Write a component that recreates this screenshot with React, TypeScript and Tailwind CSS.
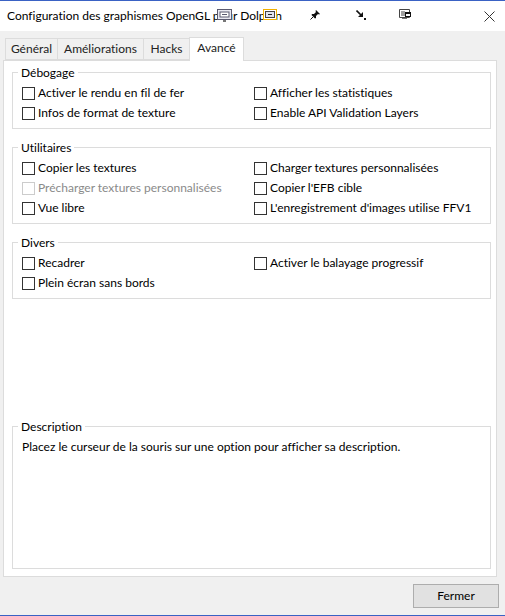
import React from "react";

const font = { fontFamily: '"Lato","Open Sans",sans-serif' };

function Check({ label, disabled }: { label: string; disabled?: boolean }) {
  return (
    <div className="flex items-center h-5">
      <span className={"w-[13px] h-[13px] border bg-white shrink-0 " + (disabled ? "border-[#cccccc]" : "border-[#333333]")} />
      <span className={"ml-[3px] whitespace-nowrap " + (disabled ? "text-[#8a8a8a]" : "text-black")}>{label}</span>
    </div>
  );
}

function Group({ title, rows, className }: { title: string; rows: [string | null, string | null, boolean?][]; className: string }) {
  return (
    <div className={"relative border border-[#dcdcdc] h-[57px] pl-[9px] pt-[10px] " + className}>
      <span className="absolute left-[5px] -top-[8px] bg-white px-[3px] leading-[16px] text-black">{title}</span>
      {rows.map((r, i) => (
        <div key={i} className="flex">
          <div className="w-[232px]">{r[0] && <Check label={r[0]} disabled={r[2]} />}</div>
          <div>{r[1] && <Check label={r[1]} />}</div>
        </div>
      ))}
    </div>
  );
}

function Tab({ label, active, w }: { label: string; active?: boolean; w: string }) {
  return (
    <div className={"flex items-center justify-center border border-[#dcdcdc] " + w + " " + (active ? "h-[24px] bg-white border-b-0 -mb-px pb-[3px] relative z-10" : "h-[22px] bg-[#f0f0f0] -mr-px")}>
      {label}
    </div>
  );
}

function Icons() {
  return (
    <>
      <svg className="absolute left-[217px] top-[8px]" width="15" height="14" viewBox="0 0 15 14">
        <rect x="0.5" y="0.5" width="14" height="10" fill="#e8e8f0" stroke="#5a5a70" />
        <rect x="3" y="3" width="9" height="5" fill="#fff" stroke="#5a5a70" />
        <rect x="5" y="5" width="5" height="1" fill="#5a5a70" />
        <rect x="6" y="11" width="3" height="2" fill="#777" />
      </svg>
      <svg className="absolute left-[263px] top-[8px]" width="14" height="11" viewBox="0 0 14 11">
        <rect x="0.5" y="0.5" width="13" height="10" fill="#fff" stroke="#f0b000" />
        <rect x="2.5" y="2.5" width="9" height="6" fill="#dfe3ee" stroke="#444" />
        <rect x="5" y="5" width="4" height="1" fill="#222" />
      </svg>
      <svg className="absolute left-[310px] top-[8px]" width="11" height="11" viewBox="0 0 11 11">
        <path d="M6 1l4 4-1 .5-1-.5-2 2v2L5 9.5 1.5 6 2 5h2l2-2-.5-1z" fill="#111" />
        <path d="M3 8L0.5 10.5" stroke="#111" />
      </svg>
      <svg className="absolute left-[356px] top-[9px]" width="10" height="10" viewBox="0 0 10 10">
        <path d="M0.5 0.5L6 6" stroke="#111" strokeWidth="1.6" />
        <path d="M7 2v5H2z" fill="#111" />
        <rect x="8" y="8" width="2" height="2" fill="#111" />
      </svg>
      <svg className="absolute left-[399px] top-[8px]" width="12" height="11" viewBox="0 0 12 11">
        <path d="M.5.5h10v8H.5z" fill="#fff" stroke="#444" />
        <path d="M3 2v5M5 2v5" stroke="#444" />
        <rect x="6" y="3" width="6" height="5" fill="#111" />
        <rect x="7" y="5" width="4" height="2" fill="#fff" />
        <rect x="3" y="9" width="5" height="1" fill="#777" />
      </svg>
    </>
  );
}

export default function App() {
  return (
    <div className="w-[505px] h-[616px] flex flex-col bg-[#f0f0f0] border-t border-b border-[#3a62c4] text-[12px] [font-variant-ligatures:none] relative overflow-hidden" style={font}>
      <div className="h-[30px] bg-white flex items-center pl-[7px] shrink-0">
        <span className="text-black whitespace-nowrap">Configuration des graphismes OpenGL pour Dolphin</span>
        <svg className="ml-auto mr-[10px]" width="11" height="11" viewBox="0 0 11 11">
          <path d="M.5.5l10 10M10.5.5l-10 10" stroke="#333" fill="none" />
        </svg>
      </div>
      <Icons />
      <div className="flex items-end pl-[5px] pt-[4px] h-[29px] shrink-0 text-[#222]">
        <Tab label="Général" w="w-[53px]" />
        <Tab label="Améliorations" w="w-[87px]" />
        <Tab label="Hacks" w="w-[47px]" />
        <Tab label="Avancé" active w="w-[55px]" />
      </div>
      <div className="mx-[3px] w-[494px] h-[517px] bg-white border border-[#dcdcdc] pl-[8px] pr-[5px] pt-[11px] flex flex-col shrink-0">
        <Group title="Débogage" className="" rows={[["Activer le rendu en fil de fer", "Afficher les statistiques"], ["Infos de format de texture", "Enable API Validation Layers"]]} />
        <Group title="Utilitaires" className="mt-[18px] !h-[77px]" rows={[["Copier les textures", "Charger textures personnalisées"], ["Précharger textures personnalisées", "Copier l'EFB cible", true], ["Vue libre", "L'enregistrement d'images utilise FFV1"]]} />
        <Group title="Divers" className="mt-[18px]" rows={[["Recadrer", "Activer le balayage progressif"], ["Plein écran sans bords", null]]} />
        <div className="relative border border-[#dcdcdc] h-[143px] mt-[127px] pl-[9px] pt-[11px] text-black">
          <span className="absolute left-[5px] -top-[8px] bg-white px-[3px] leading-[16px]">Description</span>
          Placez le curseur de la souris sur une option pour afficher sa description.
        </div>
      </div>
      <div className="flex justify-end pr-[6px] pt-[7px]">
        <div className="w-[86px] h-[24px] bg-[#e1e1e1] border border-[#adadad] flex items-center justify-center text-black">Fermer</div>
      </div>
    </div>
  );
}
